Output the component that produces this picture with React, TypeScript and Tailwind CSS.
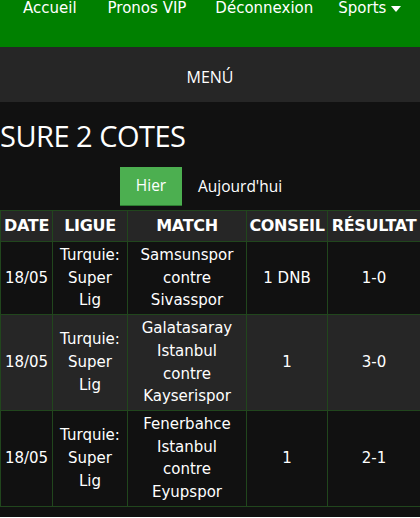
const rows = [
  { date: '18/05', league: ['Turquie:', 'Super', 'Lig'], match: ['Samsunspor', 'contre', 'Sivasspor'], tip: '1 DNB', result: '1-0' },
  { date: '18/05', league: ['Turquie:', 'Super', 'Lig'], match: ['Galatasaray', 'Istanbul', 'contre', 'Kayserispor'], tip: '1', result: '3-0' },
  { date: '18/05', league: ['Turquie:', 'Super', 'Lig'], match: ['Fenerbahce', 'Istanbul', 'contre', 'Eyupspor'], tip: '1', result: '2-1' },
]

export default function App() {
  return (
    <div className="min-h-[518px] w-[420px] bg-[#111111] text-white font-['DejaVu_Sans',sans-serif]">
      {/* top nav */}
      <nav className="h-[48px] bg-[#008000]">
        <ul className="flex pl-[23px] text-[15px] leading-[18px] -mt-px">
          <li className="mr-[31px]">Accueil</li>
          <li className="mr-[29px]">Pronos VIP</li>
          <li className="mr-[25px]">Déconnexion</li>
          <li className="flex items-center gap-[5px]">
            Sports
            <svg width="10" height="6" viewBox="0 0 10 6" className="mt-[2px]">
              <path d="M0 0h10L5 6z" fill="white" />
            </svg>
          </li>
        </ul>
      </nav>

      <div className="h-[55px] bg-[#262626] flex items-center justify-center pt-[5px] font-['Open_Sans',sans-serif] text-[16px]">
        MENÚ
      </div>

      <h1 className="mt-[16px] font-['Open_Sans',sans-serif] text-[29px] leading-[36px] -tracking-[0.5px]">
        SURE 2 COTES
      </h1>

      <div className="flex items-center mt-[13px] pl-[120px] font-['Open_Sans',sans-serif] text-[15.5px]">
        <button className="w-[62px] h-[39px] bg-[#4caf50] border-b border-[#2e7d32] text-white">Hier</button>
        <span className="ml-[16px]">Aujourd'hui</span>
      </div>

      <table className="mt-[4px] w-[420px] table-fixed border-collapse text-center text-[15px] leading-[22.7px]">
        <colgroup>
          <col className="w-[52px]" />
          <col className="w-[75px]" />
          <col className="w-[119px]" />
          <col className="w-[81px]" />
          <col className="w-[93px]" />
        </colgroup>
        <thead>
          <tr className="bg-[#262626] h-[31px]">
            {['DATE', 'LIGUE', 'MATCH', 'CONSEIL', 'RÉSULTAT'].map((h) => (
              <th key={h} className="border border-[#21461d] font-bold text-[16px] tracking-[-0.3px] p-0">{h}</th>
            ))}
          </tr>
        </thead>
        <tbody>
          {rows.map((r, i) => (
            <tr key={i} className={i % 2 === 1 ? 'bg-[#262626]' : 'bg-[#111111]'}>
              <td className="border border-[#21461d] px-0 py-[2px]">{r.date}</td>
              <td className="border border-[#21461d] px-0 py-[2px]">
                {r.league.map((l) => <div key={l}>{l}</div>)}
              </td>
              <td className="border border-[#21461d] px-0 py-[2px]">
                {r.match.map((m) => <div key={m}>{m}</div>)}
              </td>
              <td className="border border-[#21461d] px-0 py-[2px]">{r.tip}</td>
              <td className="border border-[#21461d] px-0 py-[2px]">{r.result}</td>
            </tr>
          ))}
        </tbody>
      </table>
    </div>
  )
}
